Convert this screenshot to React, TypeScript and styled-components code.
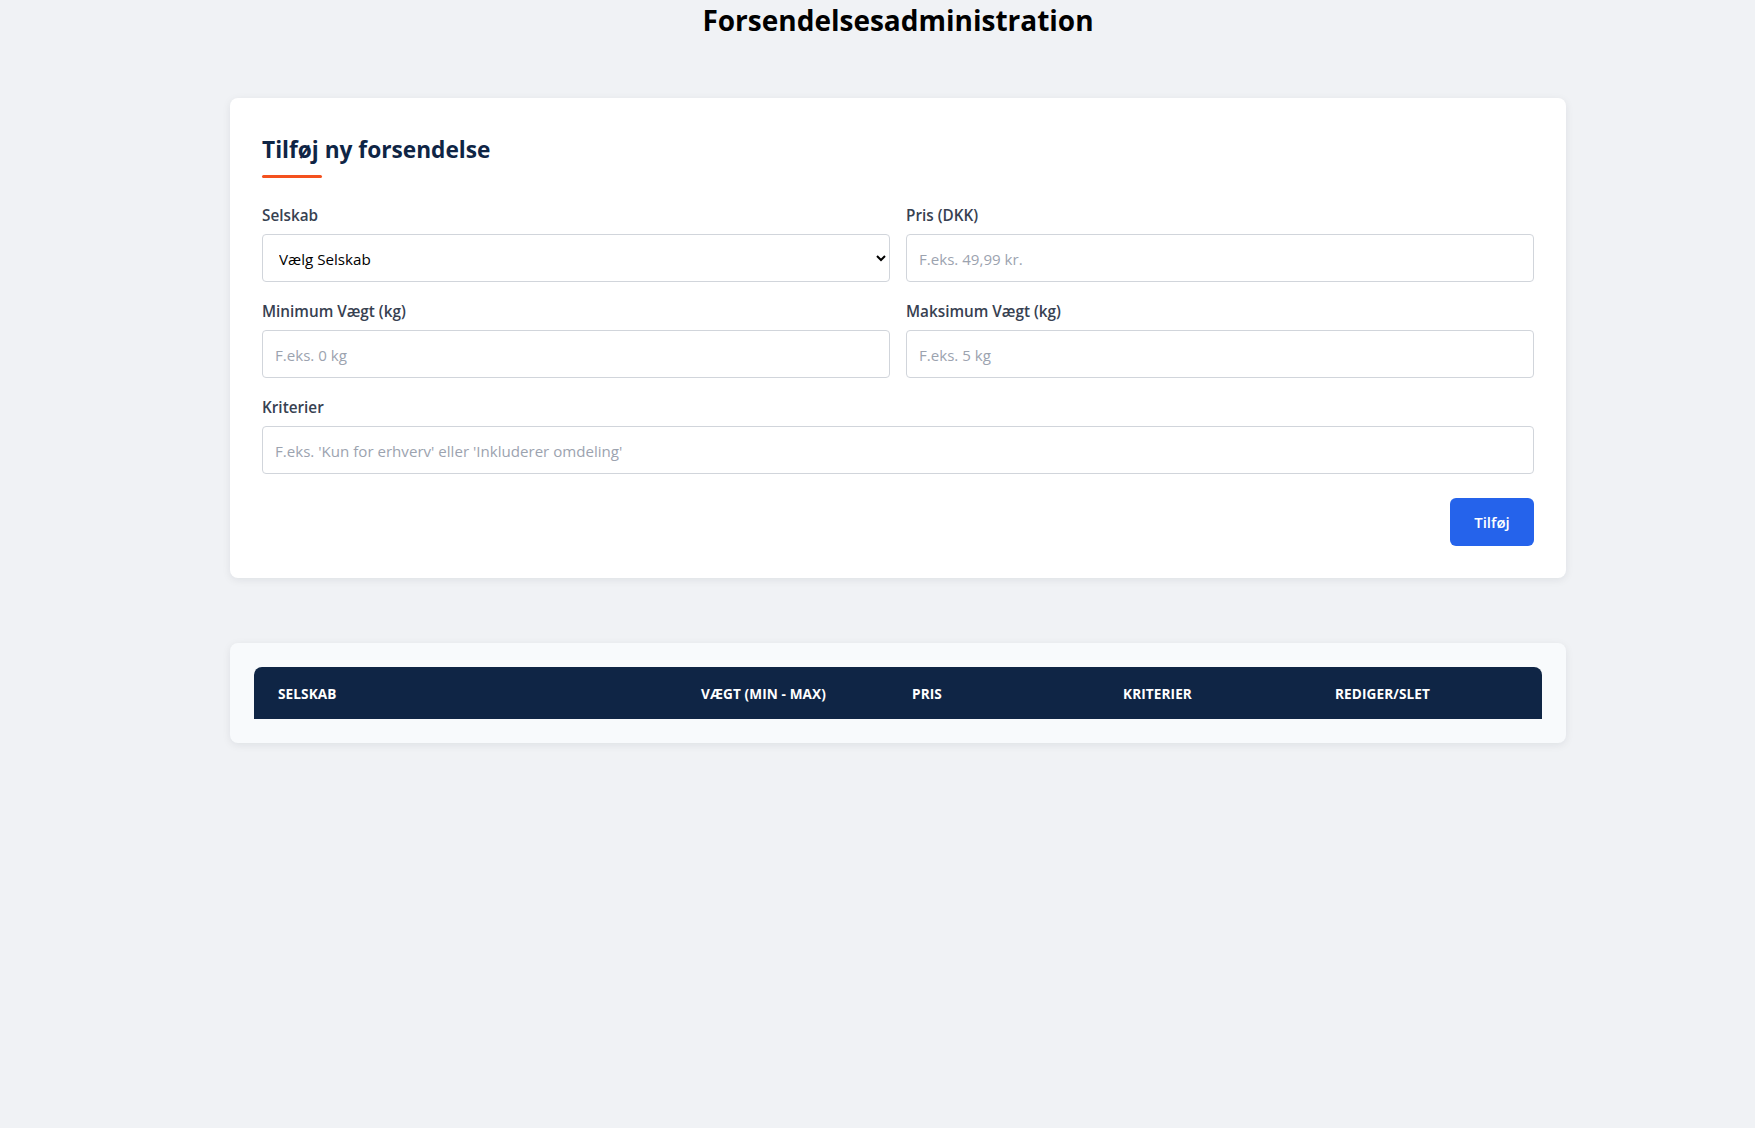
import React from "react";
import styled, { createGlobalStyle } from "styled-components";

const GlobalStyle = createGlobalStyle`
  html, body {
    margin: 0;
    padding: 0;
    background: #f0f2f5;
    font-family: "Open Sans", "Noto Sans", Arial, sans-serif;
  }
  * { box-sizing: border-box; }
`;

const Page = styled.div`
  display: flex;
  flex-direction: column;
  align-items: center;
  padding: 0 0 40px 41px;
  min-height: 1128px;
`;

const Title = styled.h1`
  margin: 0;
  font-size: 28px;
  line-height: 40px;
  font-weight: 700;
  color: #000;
`;

const Card = styled.section<{ $tinted?: boolean; $top: number }>`
  width: 1336px;
  margin-top: ${(p) => p.$top}px;
  background: ${(p) => (p.$tinted ? "#f8fafc" : "#ffffff")};
  border-radius: 8px;
  padding: ${(p) => (p.$tinted ? "24px" : "32px")};
  box-shadow: 0 2px 8px rgba(15, 23, 42, 0.08);
`;

const Heading = styled.h2`
  margin: 0;
  padding-top: 4px;
  font-size: 22.7px;
  line-height: 32px;
  font-weight: 700;
  color: #0f2545;

  &::after {
    content: "";
    display: block;
    width: 60px;
    height: 3px;
    margin-top: 9px;
    background: #f4511e;
    border-radius: 2px;
  }
`;

const FormGrid = styled.div`
  margin-top: 24px;
  display: grid;
  grid-template-columns: 1fr 1fr;
  column-gap: 16px;
  row-gap: 16px;
`;

const Field = styled.div<{ $wide?: boolean }>`
  display: flex;
  flex-direction: column;
  gap: 8px;
  grid-column: ${(p) => (p.$wide ? "1 / -1" : "auto")};
`;

const Label = styled.label`
  font-size: 15.3px;
  line-height: 24px;
  font-weight: 600;
  color: #374151;
  padding-top: 1px;
  margin-bottom: -1px;
`;

const inputBase = `
  height: 48px;
  width: 100%;
  border: 1px solid #d1d5db;
  border-radius: 4px;
  background: #ffffff;
  font-family: "Open Sans", "Noto Sans", Arial, sans-serif;
  font-size: 15.1px;
  color: #111827;
  outline: none;
`;

const TextInput = styled.input`
  ${inputBase}
  padding: 2px 12px 0;

  &::placeholder {
    color: #9ca3af;
  }
`;

const Select = styled.select`
  ${inputBase}
  padding: 2px 12px 0;
  font-size: 15.2px;
  color: #000;
`;

const Actions = styled.div`
  margin-top: 24px;
  display: flex;
  justify-content: flex-end;
`;

const Button = styled.button`
  height: 48px;
  width: 84px;
  border: none;
  border-radius: 6px;
  background: #2563eb;
  color: #ffffff;
  font-family: "Open Sans", "Noto Sans", Arial, sans-serif;
  font-size: 15px;
  font-weight: 600;
  cursor: pointer;
`;

const Table = styled.table`
  width: 100%;
  border-collapse: separate;
  border-spacing: 0;
  table-layout: fixed;
`;

const Col = styled.col<{ $w: number }>`
  width: ${(p) => p.$w}px;
`;

const Th = styled.th`
  background: #0f2545;
  color: #ffffff;
  text-align: left;
  height: 52px;
  padding: 0 24px;
  font-size: 13.6px;
  font-weight: 700;
  text-transform: uppercase;
  letter-spacing: 0.1px;
  white-space: nowrap;

  &:first-child {
    border-top-left-radius: 8px;
  }
  &:last-child {
    border-top-right-radius: 8px;
  }
`;

const columns = [
  { label: "Selskab", w: 423 },
  { label: "Vægt (min - max)", w: 211 },
  { label: "Pris", w: 211 },
  { label: "Kriterier", w: 212 },
  { label: "Rediger/Slet", w: 231 },
];

export default function App() {
  return (
    <>
      <GlobalStyle />
      <Page>
        <Title>Forsendelsesadministration</Title>

        <Card $top={58}>
          <Heading>Tilføj ny forsendelse</Heading>
          <FormGrid>
            <Field>
              <Label htmlFor="company">Selskab</Label>
              <Select id="company" defaultValue="">
                <option value="">Vælg Selskab</option>
                <option value="postnord">PostNord</option>
                <option value="gls">GLS</option>
                <option value="dao">DAO</option>
              </Select>
            </Field>
            <Field>
              <Label htmlFor="price">Pris (DKK)</Label>
              <TextInput id="price" placeholder="F.eks. 49,99 kr." />
            </Field>
            <Field>
              <Label htmlFor="minw">Minimum Vægt (kg)</Label>
              <TextInput id="minw" placeholder="F.eks. 0 kg" />
            </Field>
            <Field>
              <Label htmlFor="maxw">Maksimum Vægt (kg)</Label>
              <TextInput id="maxw" placeholder="F.eks. 5 kg" />
            </Field>
            <Field $wide>
              <Label htmlFor="crit">Kriterier</Label>
              <TextInput
                id="crit"
                placeholder="F.eks. 'Kun for erhverv' eller 'Inkluderer omdeling'"
              />
            </Field>
          </FormGrid>
          <Actions>
            <Button type="button">Tilføj</Button>
          </Actions>
        </Card>

        <Card $tinted $top={65}>
          <Table>
            <colgroup>
              {columns.map((c) => (
                <Col key={c.label} $w={c.w} />
              ))}
            </colgroup>
            <thead>
              <tr>
                {columns.map((c) => (
                  <Th key={c.label}>{c.label}</Th>
                ))}
              </tr>
            </thead>
            <tbody />
          </Table>
        </Card>
      </Page>
    </>
  );
}
